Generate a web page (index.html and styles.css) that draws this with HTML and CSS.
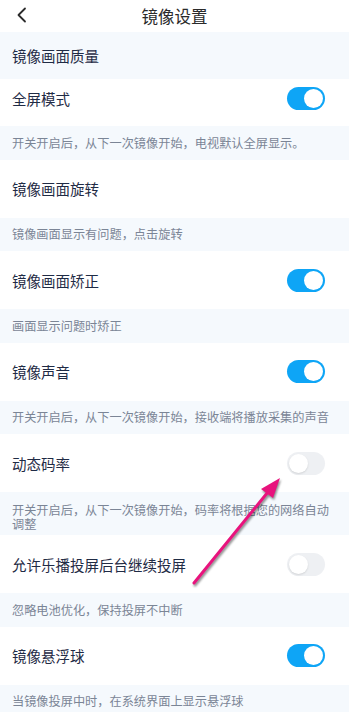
FILE: index.html
```html
<!DOCTYPE html>
<html lang="zh-CN">
<head>
  <meta charset="UTF-8" />
  <meta name="viewport" content="width=device-width, initial-scale=1.0"/>
  <title>镜像设置</title>
  <link rel="stylesheet" href="styles.css">
</head>
<body>
  <header class="topbar">
    <button class="back" aria-label="返回">
      <svg width="12" height="16" viewBox="0 0 12 16"><polyline points="9,1.5 2.5,8 9,14.5" fill="none" stroke="#2b2b2b" stroke-width="1.8" stroke-linecap="round" stroke-linejoin="round"/></svg>
    </button>
    <h1 class="title">镜像设置</h1>
  </header>

  <div class="section">镜像画面质量</div>

  <div class="row first">
    <span class="label">全屏模式</span>
    <span class="switch on"></span>
  </div>
  <p class="desc">开关开启后，从下一次镜像开始，电视默认全屏显示。</p>

  <div class="row">
    <span class="label">镜像画面旋转</span>
  </div>
  <p class="desc">镜像画面显示有问题，点击旋转</p>

  <div class="row">
    <span class="label">镜像画面矫正</span>
    <span class="switch on"></span>
  </div>
  <p class="desc">画面显示问题时矫正</p>

  <div class="row">
    <span class="label">镜像声音</span>
    <span class="switch on"></span>
  </div>
  <p class="desc">开关开启后，从下一次镜像开始，接收端将播放采集的声音</p>

  <div class="row">
    <span class="label">动态码率</span>
    <span class="switch"></span>
  </div>
  <p class="desc wrap">开关开启后，从下一次镜像开始，码率将根据您的网络自动调整</p>

  <div class="row">
    <span class="label">允许乐播投屏后台继续投屏</span>
    <span class="switch"></span>
  </div>
  <p class="desc">忽略电池优化，保持投屏不中断</p>

  <div class="row">
    <span class="label">镜像悬浮球</span>
    <span class="switch on"></span>
  </div>
  <p class="desc">当镜像投屏中时，在系统界面上显示悬浮球</p>

  <!-- annotation arrow drawn over the page -->
  <svg class="pointer" width="110" height="130" viewBox="185 470 110 130">
    <line x1="194" y1="583" x2="268" y2="492" stroke="#e8137d" stroke-width="3" stroke-linecap="round"/>
    <polygon points="280,478 273,498 261,489" fill="#e8137d"/>
  </svg>
</body>
</html>
```

FILE: styles.css
```css
:root {
  --band: #f5f9fd;
  --ink: #1f2b45;
  --muted: #7b8596;
  --blue: #0ea5f6;
}

body {
  margin: 0;
  font-family: "Noto Sans CJK SC", "Noto Sans", sans-serif;
  background: #fff;
  color: var(--ink);
  position: relative;
  overflow: hidden;
}

.topbar {
  height: 32px;
  display: flex;
  align-items: center;
  justify-content: center;
  position: relative;
}

.back {
  position: absolute;
  left: 16px;
  top: 7px;
  padding: 0;
  border: none;
  background: none;
  display: flex;
}

.title {
  margin: 0;
  font-size: 16.5px;
  font-weight: 400;
  color: #2a2a2a;
  line-height: 32px;
}

.section {
  height: 47px;
  display: flex;
  align-items: center;
  padding: 0 12px;
  background: var(--band);
  font-size: 14.5px;
}

.row {
  height: 58px;
  display: flex;
  align-items: center;
  justify-content: space-between;
  padding: 0 24px 0 12px;
}

.row.first {
  height: 47px;
  padding-bottom: 8px;
  box-sizing: border-box;
}

.label {
  font-size: 14.5px;
}

.desc {
  margin: 0;
  padding: 9.75px 16px 9.75px 12px;
  background: var(--band);
  color: var(--muted);
  font-size: 12.2px;
  line-height: 14px;
}

.desc.wrap {
  padding-top: 11px;
  padding-bottom: 4px;
}

.switch {
  width: 38px;
  height: 23px;
  border-radius: 12px;
  background: #eef0f3;
  position: relative;
  flex-shrink: 0;
}

.switch::after {
  content: "";
  position: absolute;
  top: 2px;
  left: 2px;
  width: 19px;
  height: 19px;
  border-radius: 50%;
  background: #fff;
  box-shadow: 0 1px 2px rgba(0, 0, 0, 0.12);
}

.switch.on {
  background: var(--blue);
}

.switch.on::after {
  left: auto;
  right: 2px;
  box-shadow: none;
}

.pointer {
  position: absolute;
  left: 185px;
  top: 470px;
  filter: drop-shadow(1px 2px 1px rgba(0, 0, 0, 0.45));
}
```
